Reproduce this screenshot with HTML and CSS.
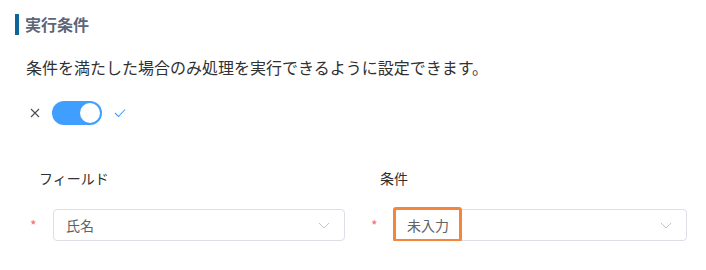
FILE: index.html
```html
<!DOCTYPE html>
<html lang="ja">
    <head>
        <meta charset="UTF-8">
        <title>実行条件</title>
        <link rel="stylesheet" href="styles.css">
    </head>
    <body>
        <div class="section">
            <div class="section-title">実行条件</div>
            <p class="description">条件を満たした場合のみ処理を実行できるように設定できます。</p>

            <div class="switch-row">
                <svg class="icon-off" viewBox="0 0 10 10" width="10" height="10">
                    <path d="M1 1 L9 9 M9 1 L1 9" stroke="#4a4d55" stroke-width="1.1" fill="none"/>
                </svg>
                <span class="switch is-on"><span class="switch-knob"></span></span>
                <svg class="icon-on" viewBox="0 0 12 10" width="12" height="10">
                    <path d="M1 5 L4.5 8.5 L11 1.5" stroke="#409eff" stroke-width="1.1" fill="none"/>
                </svg>
            </div>

            <div class="form-grid">
                <div class="form-item">
                    <div class="form-label">フィールド</div>
                    <div class="form-control">
                        <span class="required">*</span>
                        <div class="select">
                            <span class="select-value">氏名</span>
                            <svg class="chevron" viewBox="0 0 12 7" width="12" height="7">
                                <path d="M1 1 L6 6 L11 1" stroke="#c0c4cc" stroke-width="1" fill="none"/>
                            </svg>
                        </div>
                    </div>
                </div>
                <div class="form-item">
                    <div class="form-label">条件</div>
                    <div class="form-control">
                        <span class="required">*</span>
                        <div class="select">
                            <span class="select-value">未入力</span>
                            <span class="highlight"></span>
                            <svg class="chevron" viewBox="0 0 12 7" width="12" height="7">
                                <path d="M1 1 L6 6 L11 1" stroke="#c0c4cc" stroke-width="1" fill="none"/>
                            </svg>
                        </div>
                    </div>
                </div>
            </div>
        </div>
    </body>
</html>
```

FILE: styles.css
```css
body {
    margin: 0;
    background: #fff;
    color: #303133;
    font-family: "Noto Sans CJK JP", "Noto Sans", sans-serif;
}

.section {
    padding: 14px 0 0 15px;
}

.section-title {
    height: 21px;
    line-height: 21px;
    border-left: 4px solid #0f6499;
    padding-left: 6px;
    font-size: 16px;
    font-weight: bold;
    color: #5d6678;
}

.description {
    margin: 20px 0 0 11px;
    font-size: 16px;
    line-height: 24px;
    color: #303133;
}

.switch-row {
    display: flex;
    align-items: center;
    height: 24px;
    margin: 22px 0 0 15px;
}

.icon-off {
    margin-right: 12px;
}

.switch {
    position: relative;
    display: flex;
    align-items: center;
    justify-content: flex-end;
    width: 50px;
    height: 24px;
    border-radius: 12px;
    background: #409eff;
    padding: 0 2px;
    box-sizing: border-box;
}

.switch-knob {
    width: 20px;
    height: 20px;
    border-radius: 50%;
    background: #fff;
}

.icon-on {
    margin-left: 12px;
}

.form-grid {
    display: grid;
    grid-template-columns: 315px 316px;
    column-gap: 26px;
    margin: 43px 0 0 15px;
}

.form-label {
    margin-left: 9px;
    font-size: 14px;
    line-height: 20px;
    color: #303133;
}

.form-control {
    display: flex;
    align-items: center;
    margin-top: 21px;
}

.required {
    width: 23px;
    flex-shrink: 0;
    color: #f56c6c;
    font-size: 14px;
    line-height: 14px;
    padding-top: 2px;
    align-self: flex-start;
    margin-top: 7px;
}

.select {
    position: relative;
    flex: 1;
    display: flex;
    align-items: center;
    justify-content: space-between;
    height: 32px;
    padding: 0 14px 0 12px;
    border: 1px solid #dcdfe6;
    border-radius: 4px;
    box-sizing: border-box;
}

.select-value {
    font-size: 14px;
    color: #606266;
}

.highlight {
    position: absolute;
    left: -2px;
    top: -3px;
    width: 69px;
    height: 35px;
    border: 3px solid #f5853b;
    border-radius: 3px;
    box-sizing: border-box;
}
```
